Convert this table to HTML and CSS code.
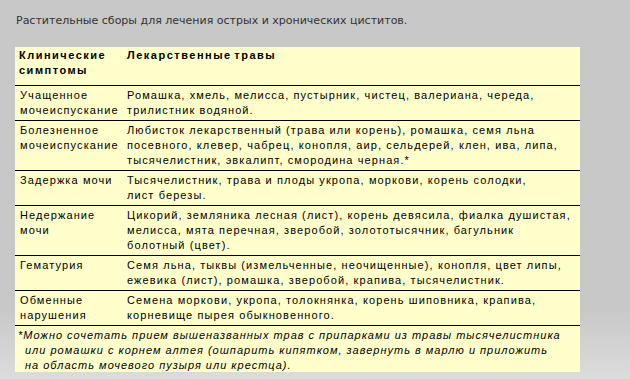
FILE: index.html
```html
<!DOCTYPE html>
<html lang="ru">
<head>
<meta charset="utf-8">
<title>Растительные сборы</title>
<link rel="stylesheet" href="styles.css">
</head>
<body>
<div class="page">
  <p class="title">Растительные сборы для лечения острых и хронических циститов.</p>
  <div class="sheet">
    <div class="row head">
      <div class="c1">Клинические<br>симптомы</div>
      <div class="c2">Лекарственные травы</div>
    </div>
    <div class="row">
      <div class="c1">Учащенное<br>мочеиспускание</div>
      <div class="c2">Ромашка, хмель, мелисса, пустырник, чистец, валериана, череда,<br>трилистник водяной.</div>
    </div>
    <div class="row">
      <div class="c1">Болезненное<br>мочеиспускание</div>
      <div class="c2">Любисток лекарственный (трава или корень), ромашка, семя льна<br>посевного, клевер, чабрец, конопля, аир, сельдерей, клен, ива, липа,<br>тысячелистник, эвкалипт, смородина черная.*</div>
    </div>
    <div class="row">
      <div class="c1">Задержка мочи</div>
      <div class="c2">Тысячелистник, трава и плоды укропа, моркови, корень солодки,<br>лист березы.</div>
    </div>
    <div class="row">
      <div class="c1">Недержание<br>мочи</div>
      <div class="c2">Цикорий, земляника лесная (лист), корень девясила, фиалка душистая,<br>мелисса, мята перечная, зверобой, золототысячник, багульник<br>болотный (цвет).</div>
    </div>
    <div class="row">
      <div class="c1">Гематурия</div>
      <div class="c2">Семя льна, тыквы (измельченные, неочищенные), конопля, цвет липы,<br>ежевика (лист), ромашка, зверобой, крапива, тысячелистник.</div>
    </div>
    <div class="row">
      <div class="c1">Обменные<br>нарушения</div>
      <div class="c2">Семена моркови, укропа, толокнянка, корень шиповника, крапива,<br>корневище пырея обыкновенного.</div>
    </div>
    <div class="note">*Можно сочетать прием вышеназванных трав с припарками из травы тысячелистника<br>или ромашки с корнем алтея (ошпарить кипятком, завернуть в марлю и приложить<br>на область мочевого пузыря или крестца).</div>
  </div>
</div>
</body>
</html>
```
FILE: styles.css
```css
html, body {
  margin: 0;
  padding: 0;
}
body {
  width: 630px;
  height: 379px;
  overflow: hidden;
  background: linear-gradient(to bottom, #c8c8c8 0, #c8c8c8 310px, #dcdcdc 379px);
}
.page {
  padding: 14px 0 0 15px;
}
.title {
  margin: 0 0 0 1px;
  font-family: "DejaVu Sans", Verdana, sans-serif;
  font-size: 11px;
  line-height: 14px;
  color: #333;
}
.sheet {
  margin-top: 19px;
  width: 565px;
  height: 325px;
  overflow: hidden;
  background: #ffffcc;
  font-family: "Liberation Sans", Arial, sans-serif;
  font-size: 11px;
  letter-spacing: 1.1px;
  line-height: 15px;
  color: #000;
}
.row {
  display: grid;
  grid-template-columns: 112px 1fr;
  border-top: 1px solid #000;
  padding: 2px 0 2px 0;
  white-space: nowrap;
}
.row.head {
  border-top: none;
  padding: 1px 0 7px 0;
  font-weight: bold;
  letter-spacing: 1.5px;
  word-spacing: -2px;
}
.c1 {
  padding-left: 5px;
}
.head .c1 {
  padding-left: 4px;
}
.note {
  border-top: 1px solid #000;
  padding: 2px 0 2px 10px;
  text-indent: -7px;
  font-style: italic;
  letter-spacing: 1px;
  white-space: nowrap;
}
```
